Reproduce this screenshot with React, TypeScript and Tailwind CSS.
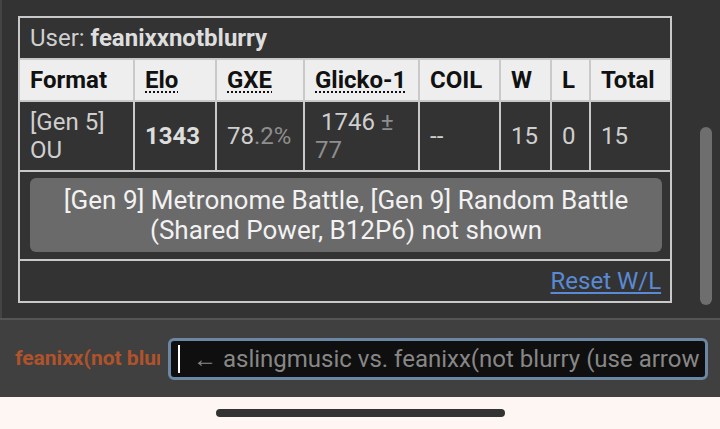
import React from 'react';

// Ladder stats popup as seen on a phone, with the chat input bar below it
interface LadderRow {
  format: string;
  elo: string;
  gxe: string;
  gxeDecimal: string;
  glicko: string;
  glickoDev: string;
  coil: string;
  w: string;
  l: string;
  total: string;
}

const row: LadderRow = {
  format: '[Gen 5] OU',
  elo: '1343',
  gxe: '78',
  gxeDecimal: '.2%',
  glicko: '1746',
  glickoDev: '± 77',
  coil: '--',
  w: '15',
  l: '0',
  total: '15',
};

const cellBorder = 'border-2 border-[#c9c9c9]';
const th = `${cellBorder} px-[10px] py-[6px] text-left font-bold text-[#111]`;
const td = `${cellBorder} px-[10px] py-[6px] align-middle`;
const abbr = 'no-underline underline decoration-dotted decoration-2 underline-offset-[3px] decoration-[#111]';

const StatsTable: React.FC = () => (
  <table className="table-fixed border-collapse w-[652px] text-[24px] leading-[28px] text-[#cfcfcf]">
    <colgroup>
      <col className="w-[115px]" />
      <col className="w-[82px]" />
      <col className="w-[88px]" />
      <col className="w-[115px]" />
      <col className="w-[81px]" />
      <col className="w-[51px]" />
      <col className="w-[39px]" />
      <col className="w-[81px]" />
    </colgroup>
    <tbody>
      <tr>
        <td colSpan={8} className={td}>
          User: <strong className="font-bold text-[#dedede]">feanixxnotblurry</strong>
        </td>
      </tr>
      <tr className="bg-[#eeeeee]">
        <th className={th}>Format</th>
        <th className={th}>
          <abbr className={abbr}>Elo</abbr>
        </th>
        <th className={th}>
          <abbr className={abbr}>GXE</abbr>
        </th>
        <th className={th}>
          <abbr className={abbr}>Glicko-1</abbr>
        </th>
        <th className={th}>COIL</th>
        <th className={th}>W</th>
        <th className={th}>L</th>
        <th className={th}>Total</th>
      </tr>
      <tr>
        <td className={td}>{row.format}</td>
        <td className={`${td} font-bold text-[#dedede]`}>{row.elo}</td>
        <td className={td}>
          {row.gxe}
          <span className="text-[#8e8e8e]">{row.gxeDecimal}</span>
        </td>
        <td className={td}>
          {'\u00a0' + row.glicko + ' '}
          <span className="text-[#8e8e8e]">{row.glickoDev}</span>
        </td>
        <td className={td}>{row.coil}</td>
        <td className={td}>{row.w}</td>
        <td className={td}>{row.l}</td>
        <td className={td}>{row.total}</td>
      </tr>
      <tr>
        <td colSpan={8} className={`${cellBorder} pt-[6px] pb-[7px] pl-[10px] pr-[8px]`}>
          <div className="rounded-[6px] bg-[#6a6a6a] py-[7px] text-center text-[26px] text-[#f2f2f2] leading-[30px]">
            [Gen 9] Metronome Battle, [Gen 9] Random Battle
            <br />
            (Shared Power, B12P6) not shown
          </div>
        </td>
      </tr>
      <tr>
        <td colSpan={8} className={`${td} text-right pr-[9px]`}>
          <a className="text-[#5a8ad4] underline underline-offset-[3px]">Reset W/L</a>
        </td>
      </tr>
    </tbody>
  </table>
);

export default function App() {
  return (
    <div className="w-[720px] h-[429px] flex flex-col overflow-hidden font-['Roboto',sans-serif]">
      <div className="relative h-[318px] bg-[#333333] border-l-2 border-[#444444] pl-[16px] pt-[16px]">
        <StatsTable />
        <div className="absolute left-[698px] top-[127px] w-[12px] h-[178px] rounded-full bg-[#6e6e6e]" />
      </div>

      <div className="h-[79px] bg-[#404040] border-t-2 border-[#555555] flex items-center pl-[15px]">
        <div className="w-[145px] overflow-hidden whitespace-nowrap text-[21px] font-bold text-[#b0532b]">
          feanixx(not blurry):
        </div>
        <div className="ml-[8px] w-[540px] h-[42px] rounded-[6px] border-[3px] border-[#6b87a3] bg-[#0f0f0f] flex items-center pl-[7px] overflow-hidden whitespace-nowrap">
          <span className="w-[2px] h-[28px] bg-white shrink-0" />
          <span className="ml-[13px] text-[24px] text-[#878787]">
            ← aslingmusic vs. feanixx(not blurry (use arrow keys)
          </span>
        </div>
      </div>

      <div className="flex-1 bg-[#fdf6f3] flex justify-center pt-[12px]">
        <div className="w-[289px] h-[8px] rounded-full bg-[#333333]" />
      </div>
    </div>
  );
}
